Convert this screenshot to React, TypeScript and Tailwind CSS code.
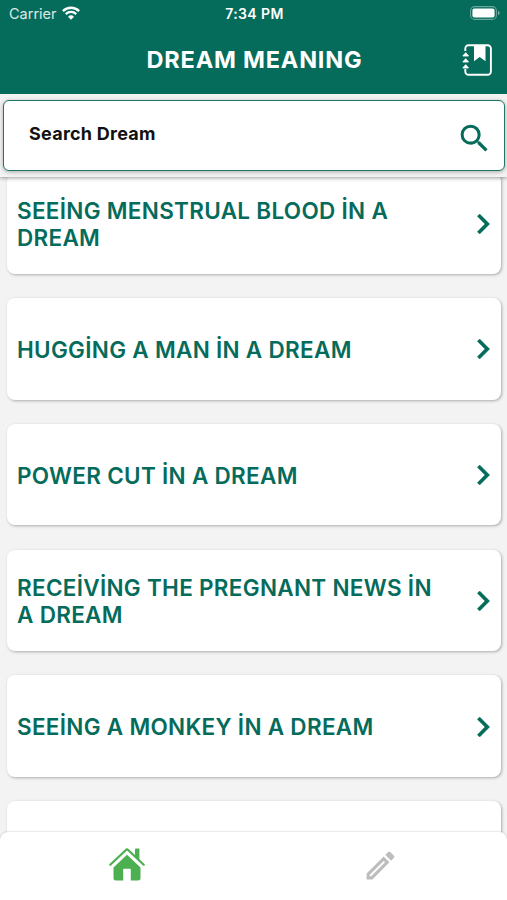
import React from "react";

interface IconProps {
  className?: string;
}

interface Dream {
  id: number;
  title: string;
}

const dreams: Dream[] = [
  { id: 1, title: "SEEİNG MENSTRUAL BLOOD İN A DREAM" },
  { id: 2, title: "HUGGİNG A MAN İN A DREAM" },
  { id: 3, title: "POWER CUT İN A DREAM" },
  { id: 4, title: "RECEİVİNG THE PREGNANT NEWS İN A DREAM" },
  { id: 5, title: "SEEİNG A MONKEY İN A DREAM" },
  { id: 6, title: "" },
];

const WifiIcon = ({ className }: IconProps) => (
  <svg className={className} viewBox="0 0 18 14" fill="none" stroke="currentColor" strokeWidth="2.3">
    <path d="M.9 5.1a11.5 11.5 0 0 1 16.2 0" />
    <path d="M3.8 8.1a7.4 7.4 0 0 1 10.4 0" />
    <path d="M9 13.7 6 10.7a4.3 4.3 0 0 1 6 0z" fill="currentColor" stroke="none" />
  </svg>
);

const BatteryIcon = ({ className }: IconProps) => (
  <svg className={className} viewBox="0 0 30 14" fill="none">
    <rect x=".6" y=".6" width="25.8" height="12.8" rx="4" stroke="white" strokeOpacity=".4" strokeWidth="1.1" />
    <rect x="2.4" y="2.4" width="22.2" height="9.2" rx="2" fill="white" />
    <path d="M28 5v4c1-.4 1.5-1.1 1.5-2S29 5.4 28 5z" fill="white" fillOpacity=".5" />
  </svg>
);

const JournalIcon = ({ className }: IconProps) => (
  <svg className={className} viewBox="0 0 30 32" fill="none">
    <path
      d="M3.3 7V4.500a3.300 3.300 0 0 1 3.300-3.300h19a3.300 3.300 0 0 1 3.300 3.300v23a3.300 3.300 0 0 1-3.300 3.300h-19a3.300 3.300 0 0 1-3.300-3.300V25"
      stroke="currentColor"
      strokeWidth="1.9"
    />
    <path d="M12 1.5h11.500v15.800L17.700 13 12 17.300z" fill="currentColor" />
    <path
      d="M3.700 8.700 6.500 12H.8zM3.700 14.700l2.800 3.300H.8zM3.700 20.700l2.800 3.300H.8z"
      fill="currentColor"
      stroke="currentColor"
      strokeWidth=".9"
      strokeLinejoin="round"
    />
  </svg>
);

const SearchIcon = ({ className }: IconProps) => (
  <svg className={className} viewBox="0 0 24 24" fill="currentColor">
    <path d="M15.5 14h-.79l-.28-.27A6.471 6.471 0 0 0 16 9.5 6.5 6.5 0 1 0 9.5 16c1.61 0 3.09-.59 4.23-1.57l.27.28v.79l5 4.99L20.49 19l-4.99-5zm-6 0C7.01 14 5 11.99 5 9.5S7.01 5 9.5 5 14 7.01 14 9.5 11.99 14 9.5 14z" />
  </svg>
);

const ChevronIcon = ({ className }: IconProps) => (
  <svg className={className} viewBox="0 0 24 24" fill="currentColor">
    <path d="M10 6 8.59 7.41 13.17 12l-4.58 4.59L10 18l6-6z" stroke="currentColor" strokeWidth=".25" strokeLinejoin="round" />
  </svg>
);

const HomeIcon = ({ className }: IconProps) => (
  <svg className={className} viewBox="0 0 36 33" fill="currentColor">
    <path d="M1.3 16.700 16.900 2a1.600 1.600 0 0 1 2.200 0L34.700 16.700" fill="none" stroke="currentColor" strokeWidth="2.2" strokeLinecap="round" strokeLinejoin="round" />
    <path d="M27 .6h2.400a1 1 0 0 1 1 1v11L26 8.500V1.600a1 1 0 0 1 1-1z" />
    <path d="M18 6.800 31.500 19.400v10.700a2.500 2.500 0 0 1-2.500 2.500h-7.200V21.500a.8.8 0 0 0-.8-.8h-6a.8.8 0 0 0-.8.8v11.100H7a2.500 2.500 0 0 1-2.500-2.500V19.400z" />
  </svg>
);

const PencilIcon = ({ className }: IconProps) => (
  <svg className={className} viewBox="0 0 24 24" fill="currentColor">
    <path d="M14.06 9.02l.92.92L5.92 19H5v-.92l9.06-9.06M17.66 3c-.25 0-.51.1-.7.29l-1.83 1.83 3.75 3.75 1.83-1.83c.39-.39.39-1.02 0-1.41l-2.34-2.34c-.2-.2-.45-.29-.71-.29zm-3.6 3.19L3 17.25V21h3.75L17.81 9.94l-3.75-3.75z" />
  </svg>
);

function DreamItem({ dream }: { dream: Dream }) {
  return (
    <button className="flex h-[101.5px] w-[494px] shrink-0 items-center justify-between rounded-lg bg-white pl-[10px] text-left shadow-[1px_1px_3px_rgba(0,0,0,0.3)]">
      <span className="w-[432px] pt-[1.5px] text-[22.5px] leading-[27px] font-semibold tracking-[0.3px] text-[#056b5b]">
        {dream.title}
      </span>
      {dream.title && <ChevronIcon className="mt-px mr-[-2px] size-10 shrink-0 text-[#056b5b]" />}
    </button>
  );
}

function App() {
  return (
    <div className="flex h-[900px] w-[507px] flex-col overflow-hidden bg-[#f3f3f3] font-['Inter','Liberation_Sans',sans-serif]">
      <header className="z-20 h-[94px] shrink-0 bg-[#056b5b] text-white">
        <div className="grid h-7 grid-cols-3 items-center pr-[7px] pl-[9px]">
          <div className="flex items-center gap-[5px]">
            <span className="text-[14.5px] text-white/85">Carrier</span>
            <WifiIcon className="mb-[2px] h-[14px] w-[18px]" />
          </div>
          <span className="pb-px text-center text-[14px] font-semibold tracking-[0.4px]">7:34 PM</span>
          <BatteryIcon className="mb-[2px] h-[14px] w-[30px] justify-self-end" />
        </div>
        <div className="grid h-[63px] grid-cols-[1fr_auto_1fr] items-center px-[15px]">
          <h1 className="col-start-2 pl-[2px] text-[23.5px] font-bold tracking-[0.8px]">DREAM MEANING</h1>
          <JournalIcon className="h-8 w-[30px] justify-self-end" />
        </div>
      </header>

      <div className="z-10 h-[83px] shrink-0 bg-[#f3f3f3] pt-[6px] pr-[2px] pl-[3px] shadow-[0_1px_4px_rgba(0,0,0,0.4)]">
        <div className="flex h-[71px] items-center justify-between rounded-md border border-[#1f7666] bg-white pr-[11px] pl-[25px] shadow-[0_1px_4px_rgba(0,0,0,0.3)]">
          <span className="pb-[4px] text-[18px] font-bold tracking-[0.25px] text-[#111]">Search Dream</span>
          <SearchIcon className="mt-[6px] size-[37px] text-[#056b5b]" />
        </div>
      </div>

      <main className="min-h-0 flex-1 overflow-hidden pl-[7px]">
        <div className="-mt-[4.5px] flex flex-col gap-[24.2px]">
          {dreams.map((dream) => (
            <DreamItem key={dream.id} dream={dream} />
          ))}
        </div>
      </main>

      <nav className="z-10 grid h-[68px] shrink-0 grid-cols-2 rounded-t-lg bg-white shadow-[0_0_2px_rgba(0,0,0,0.3)]">
        <button className="flex justify-center pt-[16px]">
          <HomeIcon className="h-[33px] w-9 text-[#4caf50]" />
        </button>
        <button className="flex justify-center pt-[15px]">
          <PencilIcon className="size-[37px] text-[#bdbdbd]" />
        </button>
      </nav>
    </div>
  );
}

export default App;
